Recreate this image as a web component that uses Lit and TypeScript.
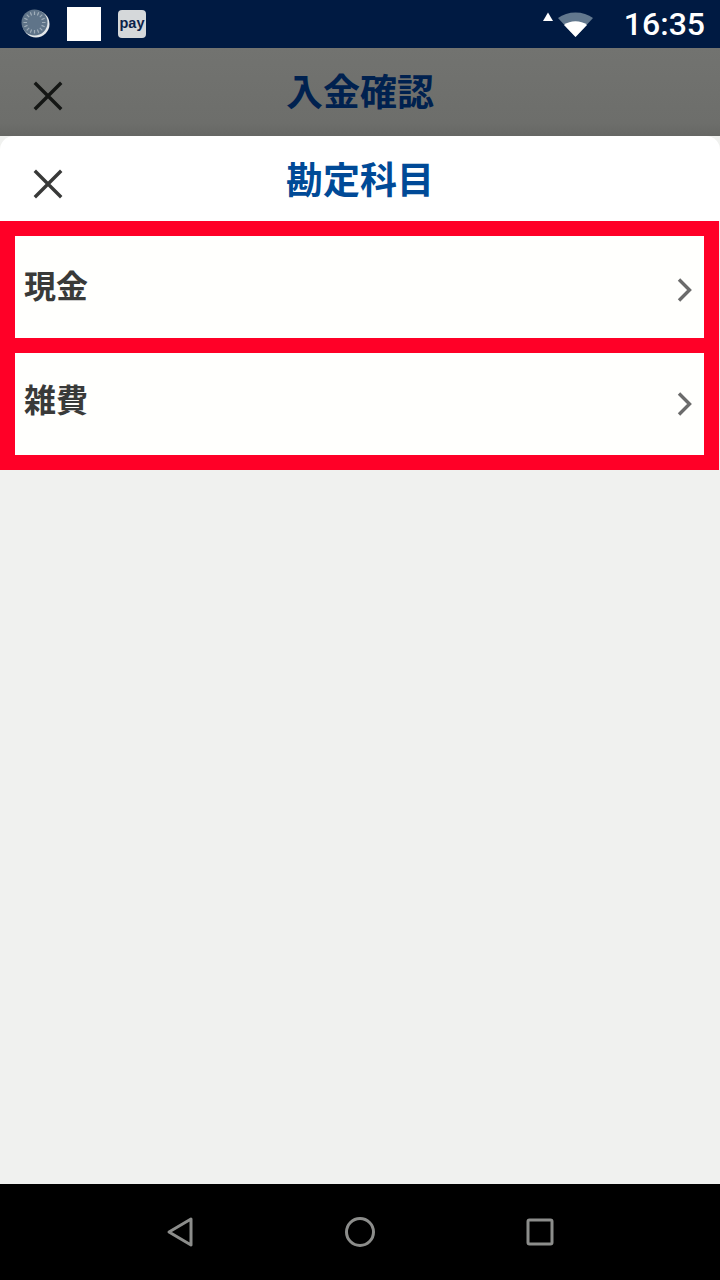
import { LitElement, html, css } from "lit";
import { customElement } from "lit/decorators.js";

const closeIcon = html`<svg class="x" width="32" height="32" viewBox="0 0 32 32"><path d="M4 4 L28 28 M28 4 L4 28" fill="none" stroke="currentColor" stroke-width="3.4" stroke-linecap="square"/></svg>`;
const chevron = html`<svg width="18" height="28" viewBox="0 0 18 28"><path d="M3 3.5 L13.5 14 L3 24.5" fill="none" stroke="#6b6b6b" stroke-width="3.4"/></svg>`;

@customElement("app-root")
export class AppRoot extends LitElement {
  static styles = css`
    :host { display: block; width: 720px; height: 1280px; font-family: "Roboto", "Noto Sans CJK JP", sans-serif; background: #f0f1ef; }
    .page { display: flex; flex-direction: column; height: 1280px; }
    .status { height: 48px; flex: none; background: #001a42; display: flex; align-items: center; box-sizing: border-box; padding: 0 15px 0 21px; }
    .left { display: flex; align-items: center; }
    .white { width: 34px; height: 34px; background: #fff; margin: 0 17px 0 16px; }
    .pay { width: 28px; height: 28px; border-radius: 4px; background: #d5d8da; color: #0b2249; font: 700 14.5px/26px "Liberation Sans", sans-serif; text-align: center; box-sizing: border-box; }
    .right { margin-left: auto; display: flex; align-items: center; }
    .clock { color: #fff; font-size: 32px; font-weight: 500; line-height: 48px; margin-left: 29px; }
    .behind { height: 88px; flex: none; background: linear-gradient(#727370, #6d6e6b 85%, #666764); position: relative; display: flex; align-items: center; justify-content: center; }
    .sheet-head { height: 85px; flex: none; background: #fff; border-radius: 14px 14px 0 0; position: relative; display: flex; align-items: center; justify-content: center; }
    .title { font-size: 37px; font-weight: 700; line-height: 1; }
    .behind .title { color: #00214f; margin-top: 2px; }
    .sheet-head .title { color: #004a97; margin-top: 5px; }
    .x { position: absolute; left: 32px; top: 32px; }
    .behind .x { color: #141614; }
    .sheet-head .x { color: #383938; }
    .list { flex: none; background: #ff0027; padding: 15px; margin-right: 1px; display: flex; flex-direction: column; gap: 15px; }
    .row { height: 102px; background: #fffffd; display: flex; align-items: center; justify-content: space-between; box-sizing: border-box; padding: 0 10px 0 9px; }
    .row span { font-size: 32px; font-weight: 700; color: #393a39; }
    .first span { margin-top: -6px; }
    .first svg { margin-top: 6px; }
    .second span { margin-top: -12px; }
    .fill { flex: 1; background: #f0f1ef; }
    .nav { height: 96px; flex: none; background: #000; display: flex; align-items: center; justify-content: center; gap: 150px; }
    .nav svg { display: block; }
  `;

  render() {
    return html`<div class="page">
      <div class="status">
        <div class="left">
          <svg width="30" height="30" viewBox="0 0 30 30">
            <circle cx="15" cy="15" r="13.5" fill="#e4e8ea"/>
            <circle cx="13.5" cy="13.5" r="13" fill="#5f7489"/>
            <g stroke="#9fadb9" stroke-width="1.2">
              <path d="M13.5 2.5V6M13.5 21V24.5M2.5 13.5H6M21 13.5H24.5M5.7 5.7L8.2 8.2M18.8 18.8L21.3 21.3M5.7 21.3L8.2 18.8M18.8 8.2L21.3 5.7M9.3 3.3L10.6 6.4M16.4 20.6L17.7 23.7M3.3 9.3L6.5 10.6M20.5 16.4L23.7 17.7M3.3 17.7L6.5 16.4M20.5 10.6L23.7 9.3M9.3 23.7L10.6 20.6M16.4 6.4L17.7 3.3"/>
            </g>
          </svg>
          <div class="white"></div>
          <div class="pay">pay</div>
        </div>
        <div class="right">
          <svg width="52" height="30" viewBox="0 0 52 30">
            <path d="M0 12 L5 3.5 L10 12 Z" fill="#fff"/>
            <path d="M15 9 C24 1.5 41 1.5 50 9 L32.5 28 Z" fill="#62788e"/>
            <path d="M21 16 C27 11 38 11 44 16 L32.5 28 Z" fill="#fff"/>
          </svg>
          <div class="clock">16:35</div>
        </div>
      </div>
      <div class="behind">${closeIcon}<div class="title">入金確認</div></div>
      <div class="sheet-head">${closeIcon}<div class="title">勘定科目</div></div>
      <div class="list">
        <div class="row first"><span>現金</span>${chevron}</div>
        <div class="row second"><span>雑費</span>${chevron}</div>
      </div>
      <div class="fill"></div>
      <div class="nav">
        <svg width="28" height="32" viewBox="0 0 28 32"><path d="M25 3 L3 16 L25 29 Z" fill="none" stroke="#8c8d8b" stroke-width="3" stroke-linejoin="round"/></svg>
        <svg width="32" height="32" viewBox="0 0 32 32"><circle cx="16" cy="16" r="13.5" fill="none" stroke="#8c8d8b" stroke-width="3"/></svg>
        <svg width="28" height="28" viewBox="0 0 28 28"><rect x="2" y="2" width="24" height="24" rx="1.5" fill="none" stroke="#8c8d8b" stroke-width="3"/></svg>
      </div>
    </div>`;
  }
}
